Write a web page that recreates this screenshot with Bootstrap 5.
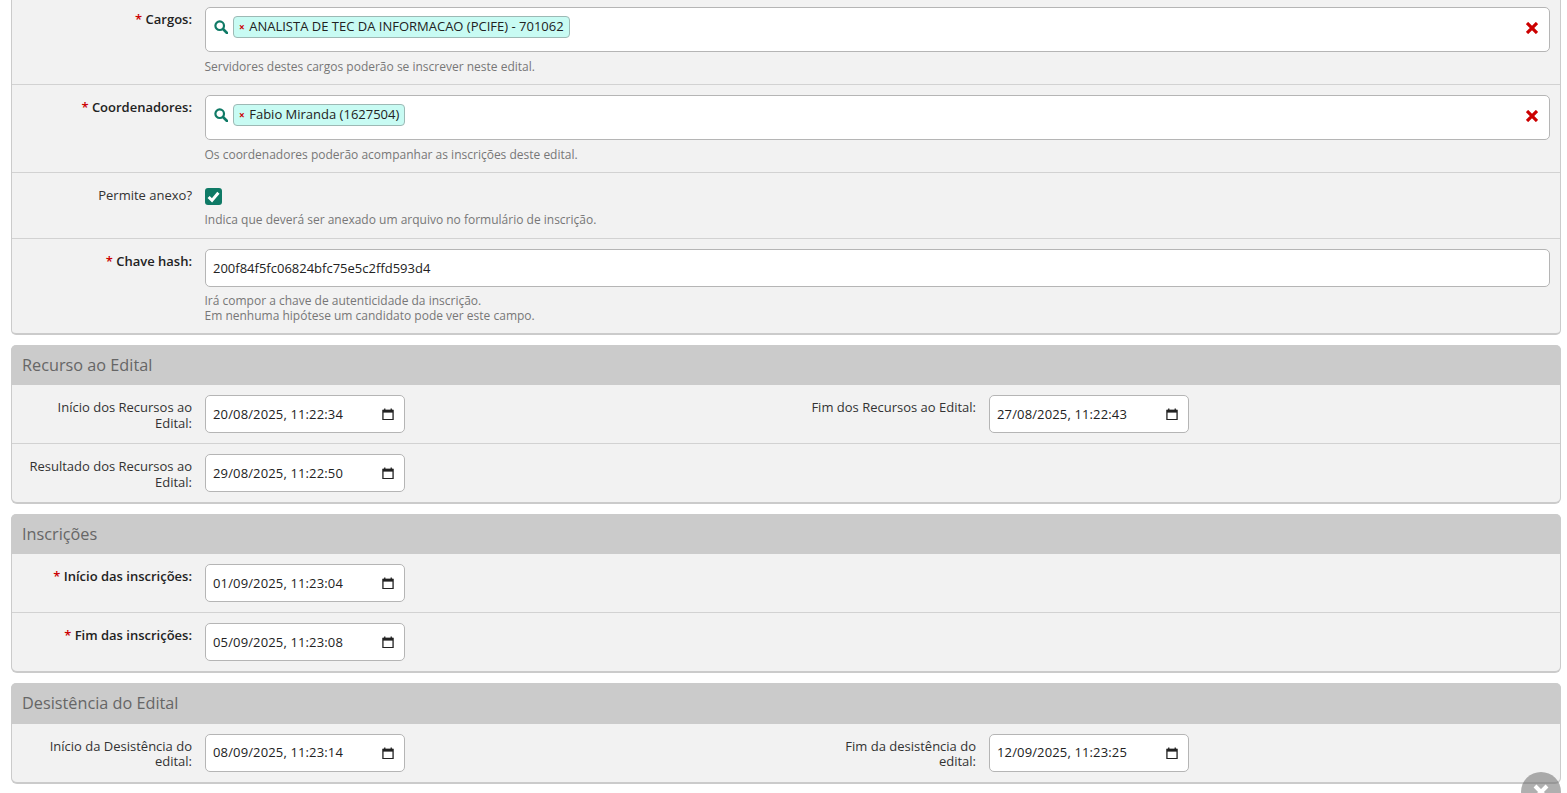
<!DOCTYPE html>
<html lang="pt-BR">
<head>
<meta charset="utf-8">
<title>Edital</title>
<link href="https://cdn.jsdelivr.net/npm/bootstrap@5.3.0/dist/css/bootstrap.min.css" rel="stylesheet">
<style>
html,body{height:793px;overflow:hidden;background:#fff;}
body{font-family:"Open Sans",sans-serif;font-size:13px;color:#222;padding:0 6px 0 11px;}
.painel{background:#f2f2f2;border:1px solid #cbcbcb;border-bottom-width:2px;border-radius:0 0 5px 5px;margin-bottom:10px;}
.painel.primeiro{border-top:0;}
.painel.comtitulo{border-radius:6px;border-top:0;}
.titulo{background:#cbcbcb;color:#666;font-size:16.25px;line-height:22px;padding:9px 11px 9px;border-radius:5px 5px 0 0;margin:0 -1px;}
.titulo.alto{padding-bottom:10px;}
.linha{padding:10px 10px 10px 0;border-bottom:1px solid #d2d2d2;}
.linha.topo{padding-top:7px;}
.linha:last-child{border-bottom:0;}
.rotulo{flex:0 0 193px;width:193px;padding:5px 13px 0 12px;text-align:right;line-height:15.6px;color:#333;}
.rotulo.req{font-weight:600;color:#222;}
.rotulo .ast{color:#c00;font-weight:600;}
.linha.justa .rotulo{line-height:15px;}
.linha.justa .data span{margin-top:-2px;}
.metade{flex:0 0 784px;width:784px;}
.corpo{flex:1 1 auto;min-width:0;}
.dica{font-size:12px;line-height:15px;color:#777;margin:7px 0 0 -.5px;}
.dica.curta{margin-top:6px;}
.multi{height:45px;background:#fff;border:1px solid #b5b5b5;border-radius:5px;padding:8px;position:relative;}
.lupa{width:14px;height:14px;margin:4px 5px 0 0;flex:none;}
.chip{height:22px;background:#c8fbf3;border:1px solid #9db9b5;border-radius:4px;line-height:19px;padding:0 5px 0 4px;color:#222;}
.chip b{color:#c00;font-size:10px;margin:0 4.5px 0 1px;font-weight:700;}
.limpa{position:absolute;right:11px;top:14px;width:12px;height:12px;}
.campo{height:38px;background:#fff;border:1px solid #b5b5b5;border-radius:5px;color:#222;font-size:13px;line-height:36px;padding:0 7px;}
.data{width:200px;padding-right:10px;letter-spacing:.14px;}
.calend{width:12px;height:12px;}
.marca{display:block;width:17px;height:17px;background:#0f7a66;border-radius:3px;margin-top:5px;}
.marca svg{display:block;width:17px;height:17px;}
.linha.anexo{padding-bottom:11px;}
.fechar{position:fixed;left:1521px;top:772px;width:40px;height:40px;border-radius:50%;background:rgba(110,110,110,.55);}
.fechar svg{position:absolute;left:11px;top:11px;width:18px;height:18px;}
</style>
</head>
<body>
<div class="painel primeiro">
  <div class="linha topo d-flex">
    <div class="rotulo req"><span class="ast">*</span> Cargos:</div>
    <div class="corpo">
      <div class="multi d-flex align-items-start">
        <svg class="lupa" viewBox="0 0 14 14"><circle cx="5.7" cy="5.7" r="4.3" fill="none" stroke="#0f7a66" stroke-width="2.2"/><path d="M9 9l4 4" stroke="#0f7a66" stroke-width="2.6" stroke-linecap="round"/></svg>
        <span class="chip"><b>×</b>ANALISTA DE TEC DA INFORMACAO (PCIFE) - 701062</span>
        <svg class="limpa" viewBox="0 0 12 12"><path d="M1 1l10 10M11 1L1 11" stroke="#c00" stroke-width="3.2"/></svg>
      </div>
      <div class="dica">Servidores destes cargos poderão se inscrever neste edital.</div>
    </div>
  </div>
  <div class="linha d-flex">
    <div class="rotulo req"><span class="ast">*</span> Coordenadores:</div>
    <div class="corpo">
      <div class="multi d-flex align-items-start">
        <svg class="lupa" viewBox="0 0 14 14"><circle cx="5.7" cy="5.7" r="4.3" fill="none" stroke="#0f7a66" stroke-width="2.2"/><path d="M9 9l4 4" stroke="#0f7a66" stroke-width="2.6" stroke-linecap="round"/></svg>
        <span class="chip"><b>×</b>Fabio Miranda (1627504)</span>
        <svg class="limpa" viewBox="0 0 12 12"><path d="M1 1l10 10M11 1L1 11" stroke="#c00" stroke-width="3.2"/></svg>
      </div>
      <div class="dica">Os coordenadores poderão acompanhar as inscrições deste edital.</div>
    </div>
  </div>
  <div class="linha anexo d-flex">
    <div class="rotulo">Permite anexo?</div>
    <div class="corpo">
      <span class="marca"><svg viewBox="0 0 17 17"><path d="M3.6 9l3.4 3.4 6.4-7.6" fill="none" stroke="#fff" stroke-width="3"/></svg></span>
      <div class="dica">Indica que deverá ser anexado um arquivo no formulário de inscrição.</div>
    </div>
  </div>
  <div class="linha d-flex">
    <div class="rotulo req"><span class="ast">*</span> Chave hash:</div>
    <div class="corpo">
      <div class="campo">200f84f5fc06824bfc75e5c2ffd593d4</div>
      <div class="dica curta">Irá compor a chave de autenticidade da inscrição.<br>Em nenhuma hipótese um candidato pode ver este campo.</div>
    </div>
  </div>
</div>

<div class="painel comtitulo">
  <div class="titulo">Recurso ao Edital</div>
  <div class="linha d-flex">
    <div class="metade d-flex">
      <div class="rotulo">Início dos Recursos ao Edital:</div>
      <div class="campo data d-flex justify-content-between align-items-center"><span>20/08/2025, 11:22:34</span><svg class="calend" viewBox="0 0 13 13"><path d="M1 2.5h11v10H1z" fill="none" stroke="#222" stroke-width="1.4"/><path d="M1 2h11v3H1z" fill="#222"/><path d="M3 .5v2M10 .5v2" stroke="#222" stroke-width="1.4"/></svg></div>
    </div>
    <div class="metade d-flex">
      <div class="rotulo">Fim dos Recursos ao Edital:</div>
      <div class="campo data d-flex justify-content-between align-items-center"><span>27/08/2025, 11:22:43</span><svg class="calend" viewBox="0 0 13 13"><path d="M1 2.5h11v10H1z" fill="none" stroke="#222" stroke-width="1.4"/><path d="M1 2h11v3H1z" fill="#222"/><path d="M3 .5v2M10 .5v2" stroke="#222" stroke-width="1.4"/></svg></div>
    </div>
  </div>
  <div class="linha d-flex">
    <div class="metade d-flex">
      <div class="rotulo">Resultado dos Recursos ao Edital:</div>
      <div class="campo data d-flex justify-content-between align-items-center"><span>29/08/2025, 11:22:50</span><svg class="calend" viewBox="0 0 13 13"><path d="M1 2.5h11v10H1z" fill="none" stroke="#222" stroke-width="1.4"/><path d="M1 2h11v3H1z" fill="#222"/><path d="M3 .5v2M10 .5v2" stroke="#222" stroke-width="1.4"/></svg></div>
    </div>
  </div>
</div>

<div class="painel comtitulo">
  <div class="titulo">Inscrições</div>
  <div class="linha d-flex">
    <div class="metade d-flex">
      <div class="rotulo req"><span class="ast">*</span> Início das inscrições:</div>
      <div class="campo data d-flex justify-content-between align-items-center"><span>01/09/2025, 11:23:04</span><svg class="calend" viewBox="0 0 13 13"><path d="M1 2.5h11v10H1z" fill="none" stroke="#222" stroke-width="1.4"/><path d="M1 2h11v3H1z" fill="#222"/><path d="M3 .5v2M10 .5v2" stroke="#222" stroke-width="1.4"/></svg></div>
    </div>
  </div>
  <div class="linha d-flex">
    <div class="metade d-flex">
      <div class="rotulo req"><span class="ast">*</span> Fim das inscrições:</div>
      <div class="campo data d-flex justify-content-between align-items-center"><span>05/09/2025, 11:23:08</span><svg class="calend" viewBox="0 0 13 13"><path d="M1 2.5h11v10H1z" fill="none" stroke="#222" stroke-width="1.4"/><path d="M1 2h11v3H1z" fill="#222"/><path d="M3 .5v2M10 .5v2" stroke="#222" stroke-width="1.4"/></svg></div>
    </div>
  </div>
</div>

<div class="painel comtitulo">
  <div class="titulo alto">Desistência do Edital</div>
  <div class="linha justa d-flex">
    <div class="metade d-flex">
      <div class="rotulo">Início da Desistência do edital:</div>
      <div class="campo data d-flex justify-content-between align-items-center"><span>08/09/2025, 11:23:14</span><svg class="calend" viewBox="0 0 13 13"><path d="M1 2.5h11v10H1z" fill="none" stroke="#222" stroke-width="1.4"/><path d="M1 2h11v3H1z" fill="#222"/><path d="M3 .5v2M10 .5v2" stroke="#222" stroke-width="1.4"/></svg></div>
    </div>
    <div class="metade d-flex">
      <div class="rotulo">Fim da desistência do edital:</div>
      <div class="campo data d-flex justify-content-between align-items-center"><span>12/09/2025, 11:23:25</span><svg class="calend" viewBox="0 0 13 13"><path d="M1 2.5h11v10H1z" fill="none" stroke="#222" stroke-width="1.4"/><path d="M1 2h11v3H1z" fill="#222"/><path d="M3 .5v2M10 .5v2" stroke="#222" stroke-width="1.4"/></svg></div>
    </div>
  </div>
</div>
<div class="fechar"><svg viewBox="0 0 18 18"><path d="M3 3l12 12M15 3L3 15" stroke="#fff" stroke-width="4"/></svg></div>
<script src="https://cdn.jsdelivr.net/npm/bootstrap@5.3.0/dist/js/bootstrap.bundle.min.js"></script>
</body>
</html>
